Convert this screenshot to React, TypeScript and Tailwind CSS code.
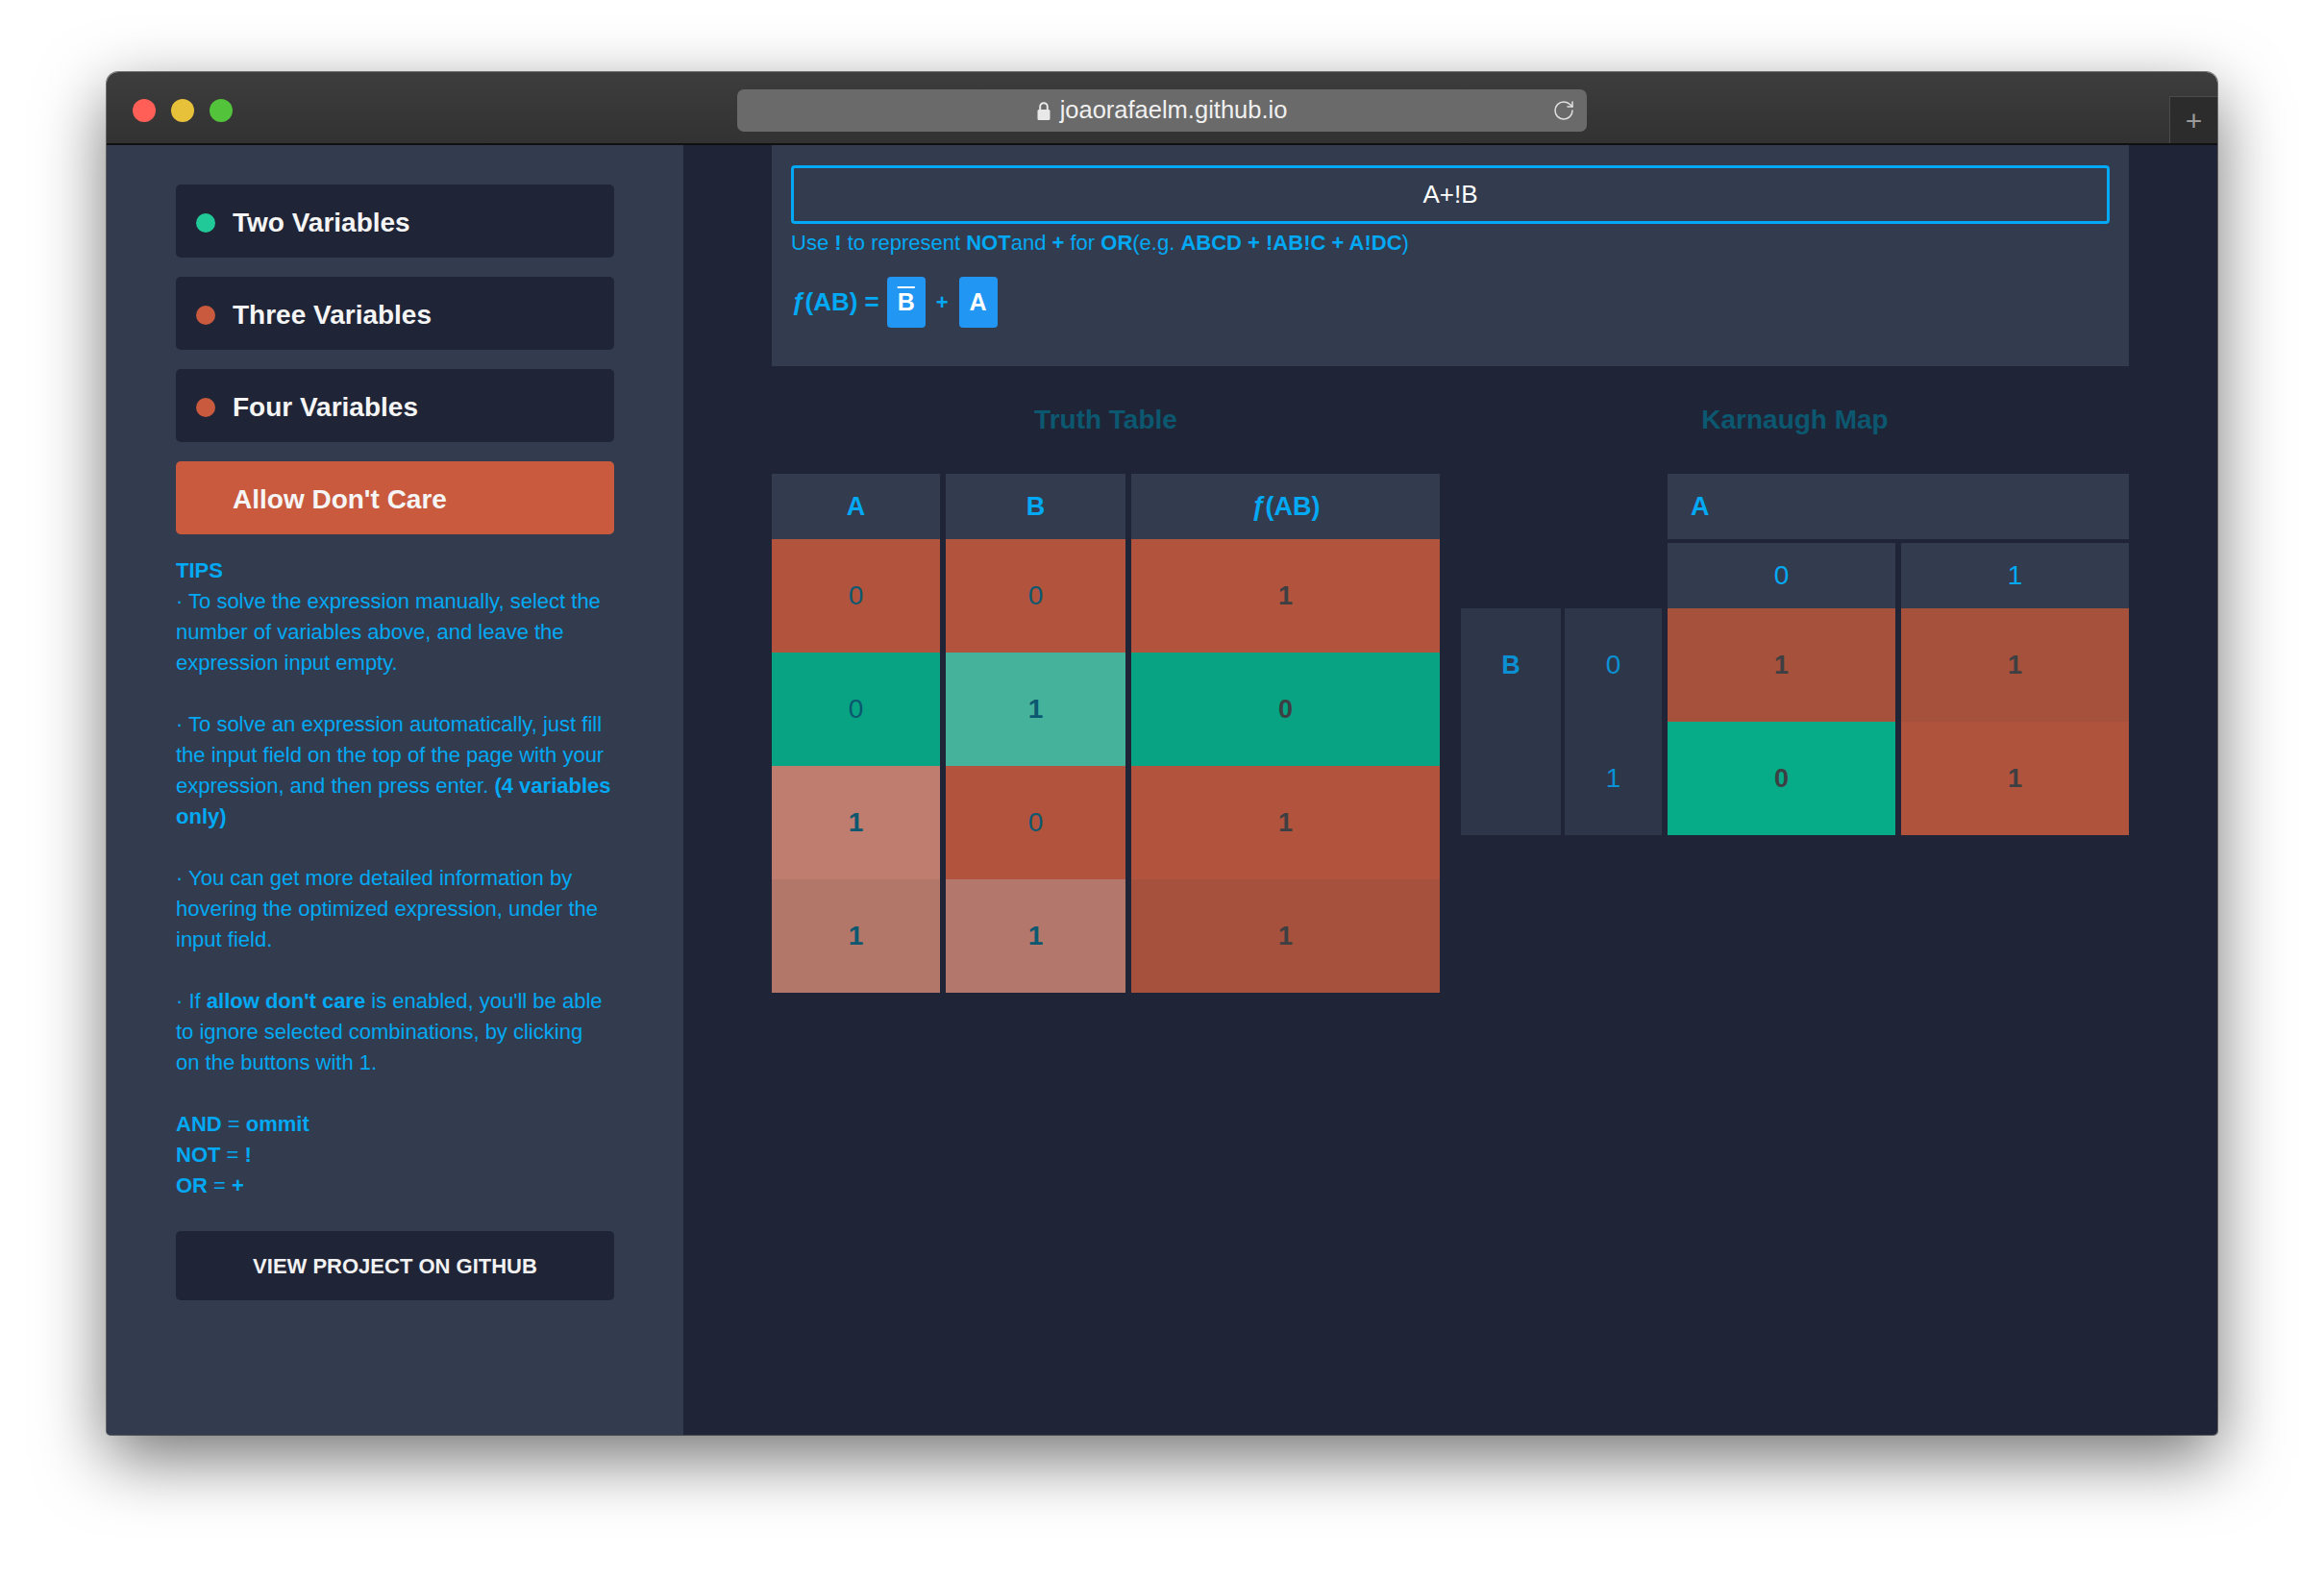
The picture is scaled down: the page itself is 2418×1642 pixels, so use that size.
import { RotateCw } from "lucide-react";

const variableButtons = [
  { label: "Two Variables", dot: "bg-[#20c997]" },
  { label: "Three Variables", dot: "bg-[#c95a3e]" },
  { label: "Four Variables", dot: "bg-[#c95a3e]" },
];

const truthRows = [
  { a: "0", b: "0", f: "1", ac: "bg-[#b1533d]", bc: "bg-[#b1533d]", fc: "bg-[#b1533d]" },
  { a: "0", b: "1", f: "0", ac: "bg-[#07a383]", bc: "bg-[#45b29b]", fc: "bg-[#07a383]" },
  { a: "1", b: "0", f: "1", ac: "bg-[#bf7d6f]", bc: "bg-[#b1533d]", fc: "bg-[#b1533d]" },
  { a: "1", b: "1", f: "1", ac: "bg-[#b3776a]", bc: "bg-[#b3786b]", fc: "bg-[#a6513d]" },
];

function Lock() {
  return (
    <svg width="14" height="20" viewBox="0 0 14 20">
      <path d="M3.2 9.5V6a3.8 3.8 0 0 1 7.6 0v3.5" fill="none" stroke="#e8e8e8" strokeWidth="2" />
      <rect x="0.5" y="9" width="13" height="11" rx="1.5" fill="#e8e8e8" />
    </svg>
  );
}

// A/B columns: zeros are thin, ones look heavier in the reference
function BitCell({ v, bg }: { v: string; bg: string }) {
  return (
    <div
      className={`h-[118px] flex items-center justify-center text-[28px] text-[#0b5870] ${bg} ${
        v === "1" ? "font-bold" : "font-normal"
      }`}
    >
      {v}
    </div>
  );
}

function TruthTable() {
  return (
    <div className="grid grid-cols-[175px_187px_321px] gap-x-[6px]">
      <div className="h-[68px] bg-[#323c4e] flex items-center justify-center text-[27px] font-bold text-[#03a9f4]">A</div>
      <div className="h-[68px] bg-[#323c4e] flex items-center justify-center text-[27px] font-bold text-[#03a9f4]">B</div>
      <div className="h-[68px] bg-[#323c4e] flex items-center justify-center text-[27px] font-bold text-[#03a9f4]">
        <span className="italic">ƒ</span>(AB)
      </div>
      {truthRows.map((r, i) => (
        <div key={i} className="contents">
          <BitCell v={r.a} bg={r.ac} />
          <BitCell v={r.b} bg={r.bc} />
          <div className={`h-[118px] flex items-center justify-center text-[27px] font-bold text-[#3d3f42] ${r.fc}`}>{r.f}</div>
        </div>
      ))}
    </div>
  );
}

function KarnaughMap() {
  return (
    <div className="flex flex-col">
      <div className="flex">
        <div className="w-[215px] shrink-0" />
        <div className="flex-1 h-[68px] bg-[#323c4e] flex items-center pl-[24px] text-[27px] font-bold text-[#03a9f4]">A</div>
      </div>
      <div className="flex mt-[4px]">
        <div className="w-[215px] shrink-0" />
        <div className="flex-1 grid grid-cols-2 gap-x-[6px]">
          <div className="h-[68px] bg-[#323c4e] flex items-center justify-center text-[28px] text-[#03a9f4]">0</div>
          <div className="h-[68px] bg-[#323c4e] flex items-center justify-center text-[28px] text-[#03a9f4]">1</div>
        </div>
      </div>
      <div className="flex">
        <div className="w-[104px] h-[236px] shrink-0 bg-[#2e3749]">
          <div className="h-[118px] flex items-center justify-center text-[27px] font-bold text-[#0a90d3]">B</div>
        </div>
        <div className="w-[101px] h-[236px] shrink-0 ml-[4px] bg-[#2e3749] flex flex-col">
          <div className="h-[118px] flex items-center justify-center text-[28px] text-[#0a90d3]">0</div>
          <div className="h-[118px] flex items-center justify-center text-[28px] text-[#0a90d3]">1</div>
        </div>
        <div className="flex-1 ml-[6px] grid grid-cols-2 gap-x-[6px]">
          <div className="h-[118px] bg-[#a6513c] flex items-center justify-center text-[27px] font-bold text-[#3d3f42]">1</div>
          <div className="h-[118px] bg-[#a5513c] flex items-center justify-center text-[27px] font-bold text-[#3d3f42]">1</div>
          <div className="h-[118px] bg-[#06ab88] flex items-center justify-center text-[27px] font-bold text-[#3d3f42]">0</div>
          <div className="h-[118px] bg-[#b0533c] flex items-center justify-center text-[27px] font-bold text-[#3d3f42]">1</div>
        </div>
      </div>
    </div>
  );
}

function Sidebar() {
  return (
    <aside className="w-[600px] shrink-0 bg-[#323c4e] pt-[41px] px-[72px]">
      <div className="flex flex-col gap-[20px]">
        {variableButtons.map((b) => (
          <div key={b.label} className="h-[76px] rounded-[5px] bg-[#1f2537] flex items-center pl-[21px] pt-[3px]">
            <span className={`w-[20px] h-[20px] rounded-full ${b.dot}`} />
            <span className="ml-[18px] text-[28px] font-bold text-[#f5f5f5]">{b.label}</span>
          </div>
        ))}
        <div className="h-[76px] rounded-[5px] bg-[#c95a3e] flex items-center pl-[59px] pt-[3px]">
          <span className="text-[28px] font-bold text-[#f5f5f5]">Allow Don't Care</span>
        </div>
      </div>

      <div className="mt-[22px] text-[22px] leading-[32px] text-[#03a9f4] whitespace-nowrap">
        <div className="font-bold">TIPS</div>
        <p>
          · To solve the expression manually, select the
          <br />
          number of variables above, and leave the
          <br />
          expression input empty.
        </p>
        <p className="mt-[32px]">
          · To solve an expression automatically, just fill
          <br />
          the input field on the top of the page with your
          <br />
          expression, and then press enter. <b>(4 variables</b>
          <br />
          <b>only)</b>
        </p>
        <p className="mt-[32px]">
          · You can get more detailed information by
          <br />
          hovering the optimized expression, under the
          <br />
          input field.
        </p>
        <p className="mt-[32px]">
          · If <b>allow don't care</b> is enabled, you'll be able
          <br />
          to ignore selected combinations, by clicking
          <br />
          on the buttons with 1.
        </p>
        <p className="mt-[32px]">
          <b>AND</b> = <b>ommit</b>
          <br />
          <b>NOT</b> = <b>!</b>
          <br />
          <b>OR</b> = <b>+</b>
        </p>
      </div>

      <div className="mt-[31px] h-[72px] rounded-[5px] bg-[#1f2537] flex items-center justify-center text-[22px] font-bold text-[#f2f2f2]">
        VIEW PROJECT ON GITHUB
      </div>
    </aside>
  );
}

function ExpressionPanel() {
  return (
    <div className="bg-[#323c4e] px-[20px] pt-[21px] pb-[40px]">
      <div className="h-[61px] rounded-[4px] border-[3px] border-[#03a9f4] flex items-center justify-center text-[26px] text-white">
        A+!B
      </div>
      <div className="mt-[7px] text-[22px] leading-[26px] text-[#03a9f4] whitespace-nowrap">
        Use <b>!</b> to represent <b>NOT</b>and <b>+</b> for <b>OR</b>(e.g. <b>ABCD + !AB!C + A!DC</b>)
      </div>
      <div className="mt-[22px] flex items-center h-[53px]">
        <span className="text-[26px] font-bold text-[#03a9f4]">
          <span className="italic">ƒ</span>(AB) =
        </span>
        <span className="ml-[8px] w-[40px] h-[53px] rounded-[4px] bg-[#2196f3] flex items-center justify-center text-[25px] font-bold text-white">
          <span className="overline decoration-2">B</span>
        </span>
        <span className="mx-[11px] text-[22px] font-bold text-[#03a9f4]">+</span>
        <span className="w-[40px] h-[53px] rounded-[4px] bg-[#2196f3] flex items-center justify-center text-[25px] font-bold text-white">
          A
        </span>
      </div>
    </div>
  );
}

export default function App() {
  return (
    <div className="min-h-screen w-full bg-white pt-[75px] px-[111px] font-[Liberation_Sans,Arial,sans-serif]">
      <div className="w-[2196px] h-[1418px] flex flex-col rounded-t-[12px] rounded-b-[4px] overflow-hidden shadow-[0_24px_70px_rgba(0,0,0,0.55)] ring-1 ring-black/50">
        {/* Title bar */}
        <div className="h-[76px] shrink-0 grid grid-cols-[1fr_884px_1fr] bg-gradient-to-b from-[#3d3d3d] to-[#323232] border-b-[2px] border-[#101010]">
          <div className="flex items-center pt-[5px]">
            <div className="flex items-center pl-[27px] gap-[16px]">
              <span className="w-[24px] h-[24px] rounded-full bg-[#ff5f57]" />
              <span className="w-[24px] h-[24px] rounded-full bg-[#e8c13b]" />
              <span className="w-[24px] h-[24px] rounded-full bg-[#52c33b]" />
            </div>
          </div>
          <div className="flex items-center pt-[5px]">
            <div className="w-full h-[44px] rounded-[7px] bg-[#6a6a6a] relative flex items-center justify-center gap-[10px]">
              <Lock />
              <span className="text-[25.5px] text-[#f0f0f0]">joaorafaelm.github.io</span>
              <RotateCw className="absolute right-[12px] top-[10px]" size={24} strokeWidth={1.5} color="#e0e0e0" />
            </div>
          </div>
          <div className="flex justify-end items-end">
            <div className="w-[50px] h-[49px] bg-[#2c2c2c] border-l border-t border-[#4a4a4a] flex items-center justify-center text-[30px] font-light text-[#9a9a9a]">
              +
            </div>
          </div>
        </div>

        {/* Content */}
        <div className="flex-1 flex bg-[#1f2537]">
          <Sidebar />
          <main className="flex-1 px-[92px]">
            <ExpressionPanel />
            <div className="mt-[38px] grid grid-cols-2 gap-x-[22px]">
              <div>
                <div className="h-[36px] flex items-center justify-center text-[28px] font-bold text-[#0b5870]">Truth Table</div>
                <div className="mt-[38px]">
                  <TruthTable />
                </div>
              </div>
              <div>
                <div className="h-[36px] flex items-center justify-center text-[28px] font-bold text-[#0b5870]">Karnaugh Map</div>
                <div className="mt-[38px]">
                  <KarnaughMap />
                </div>
              </div>
            </div>
          </main>
        </div>
      </div>
    </div>
  );
}
